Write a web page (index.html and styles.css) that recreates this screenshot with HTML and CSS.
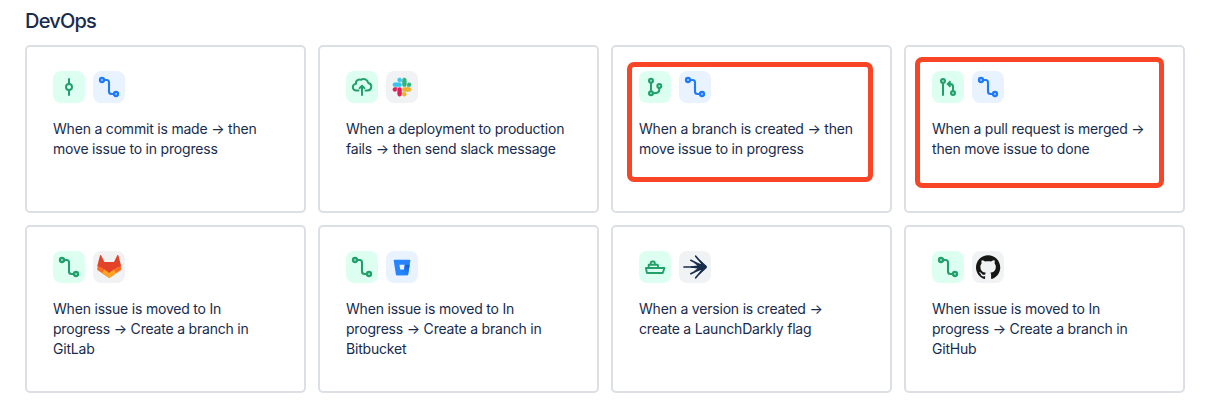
FILE: index.html
```html
<!DOCTYPE html>
<html lang="en">
<head>
<meta charset="utf-8">
<title>DevOps</title>
<link rel="stylesheet" href="styles.css">
</head>
<body>
<svg class="defs" width="0" height="0">
  <symbol id="move" viewBox="0 0 32 32"><g fill="none" stroke="currentColor" stroke-width="2.100"><circle cx="9" cy="9" r="2.100" fill="currentColor" fill-opacity=".35"/><circle cx="23" cy="23" r="2.100" fill="currentColor" fill-opacity=".35"/><path d="M11 9h2.500q2.500 0 2.500 2.500v9q0 2.500 2.500 2.500h2.500"/></g></symbol>
</svg>
<main class="section">
  <h2 class="title">DevOps</h2>
  <div class="grid">
    <article class="card">
      <div class="icons">
        <svg class="tile green" viewBox="0 0 32 32"><g fill="none" stroke="currentColor" stroke-width="2"><circle cx="16" cy="16" r="3"/><path d="M16 8v5M16 19v5" stroke-linecap="round"/></g></svg>
        <svg class="tile blue"><use href="#move"/></svg>
      </div>
      <p class="rule">When a commit is made → then<br>move issue to in progress</p>
    </article>
    <article class="card">
      <div class="icons">
        <svg class="tile green" viewBox="0 0 32 32"><g fill="none" stroke="currentColor" stroke-width="2" stroke-linecap="round" stroke-linejoin="round"><path d="M12.500 19.500H10.500a3.400 3.400 0 0 1-.5-6.800a3.300 3.300 0 0 1 1.500-3.500a3.300 3.300 0 0 1 3.500-.4a4.600 4.600 0 0 1 7.200 3.200a3.800 3.800 0 0 1-.2 7.500H19.500M16 24V15.500M13.600 17.100L16 14.700l2.400 2.400"/></g></svg>
        <svg class="tile gray" viewBox="0 0 32 32"><g transform="translate(6.900 7) scale(.148)" stroke-width="4"><path fill="#e01e5a" stroke="#e01e5a" d="M25.800 77.600a12.900 12.900 0 1 1-12.900-12.900h12.900zM32.300 77.600a12.900 12.900 0 0 1 25.800 0v32.300a12.900 12.900 0 0 1-25.800 0z"/><path fill="#36c5f0" stroke="#36c5f0" d="M45.200 25.800a12.900 12.900 0 1 1 12.900-12.900v12.900zM45.200 32.300a12.900 12.900 0 0 1 0 25.800H12.900a12.900 12.900 0 0 1 0-25.800z"/><path fill="#2eb67d" stroke="#2eb67d" d="M97 45.200a12.900 12.900 0 1 1 12.900 12.900H97zM90.500 45.200a12.900 12.900 0 0 1-25.800 0V12.900a12.900 12.900 0 0 1 25.800 0z"/><path fill="#ecb22e" stroke="#ecb22e" d="M77.600 97a12.900 12.900 0 1 1-12.900 12.900V97zM77.600 90.500a12.900 12.900 0 0 1 0-25.800h32.300a12.900 12.900 0 0 1 0 25.800z"/></g></svg>
      </div>
      <p class="rule">When a deployment to production<br>fails → then send slack message</p>
    </article>
    <article class="card">
      <div class="icons">
        <svg class="tile green" viewBox="0 0 32 32"><g fill="none" stroke="currentColor" stroke-width="2"><g fill="currentColor" fill-opacity=".35"><circle cx="12" cy="9.700" r="2"/><circle cx="12" cy="22.300" r="2"/><circle cx="20.300" cy="15" r="2"/></g><path d="M12 11.700v8.600M20.300 17v1.500q0 3.200-3.200 3.400L14 22.300"/></g></svg>
        <svg class="tile blue"><use href="#move"/></svg>
      </div>
      <p class="rule">When a branch is created → then<br>move issue to in progress</p>
      <div class="highlight highlight-branch"></div>
    </article>
    <article class="card">
      <div class="icons">
        <svg class="tile green" viewBox="0 0 32 32"><g fill="none" stroke="currentColor" stroke-width="2"><g fill="currentColor" fill-opacity=".35"><circle cx="11" cy="10" r="2"/><circle cx="21" cy="22" r="2"/></g><path d="M11 12v12" stroke-linecap="round"/><path d="M21 20v-4.500q0-2.500-2.500-2.500h-2M18.500 10.300l-2.700 2.700 2.700 2.700"/></g></svg>
        <svg class="tile blue"><use href="#move"/></svg>
      </div>
      <p class="rule">When a pull request is merged →<br>then move issue to done</p>
      <div class="highlight highlight-merge"></div>
    </article>
    <article class="card">
      <div class="icons">
        <svg class="tile green"><use href="#move"/></svg>
        <svg class="tile gray" viewBox="0 0 32 32"><path fill="#fc6d26" d="M5.800 12L4.200 17.500q-.3 1 .5 1.700L16.200 27l11.500-7.800q.8-.7.500-1.700L26.600 12z"/><path fill="#e24329" d="M7 4.300q.6-.8 1.100 0L11.400 11h9.600L24.300 4.300q.5-.8 1.100 0L28.200 15.200q-4 .4-7.400 3.300L16.200 22l-4.600-3.500q-3-2.900-7.400-3.300z"/><path fill="#fca326" d="M11.300 18.600l4.900 3.500 4.900-3.500 2.200 3.600L16.200 27l-7.100-4.800z"/></svg>
      </div>
      <p class="rule">When issue is moved to In<br>progress → Create a branch in<br>GitLab</p>
    </article>
    <article class="card">
      <div class="icons">
        <svg class="tile green"><use href="#move"/></svg>
        <svg class="tile blue" viewBox="0 0 32 32"><defs><linearGradient id="bucket" x1="1" y1="0" x2=".4" y2=".7"><stop offset=".1" stop-color="#1060d4"/><stop offset="1" stop-color="#2684ff"/></linearGradient></defs><path fill="#2684ff" fill-rule="evenodd" d="M8.300 8.700h15.500q.7 0 .6.700l-2.300 14.200q-.1.700-.8.700H10.700q-.7 0-.8-.7L7.700 9.400q-.1-.7.600-.7zM13.400 13.800l.9 5h3.700l.8-5z"/><path fill="url(#bucket)" d="M23.700 13.800h-4.900l-.8 5h-3.700l-4.100 5.200q.3.300.7.300h10.400q.7 0 .8-.7z"/></svg>
      </div>
      <p class="rule">When issue is moved to In<br>progress → Create a branch in<br>Bitbucket</p>
    </article>
    <article class="card">
      <div class="icons">
        <svg class="tile green" viewBox="0 0 32 32"><g fill="none" stroke="currentColor" stroke-width="1.900" stroke-linejoin="round"><path d="M7 17h18.500l-1.800 5H8.700q-.8 0-1-.8zM9.700 17v-3.300h9l.8 3.300M11.700 13.500v-1.300q0-1.700 1.600-1.700h.9q1.600 0 1.600 1.700v1.300"/></g></svg>
        <svg class="tile gray" viewBox="0 0 32 32"><g fill="none" stroke="#172b4d" stroke-width="1.700" stroke-linecap="round"><path d="M5 16h20M11.800 9.300L24 15.500M16.700 5.200L25 15M11.800 22.700L24 16.700M16.700 26.800L25 17"/></g><path fill="#172b4d" d="M28 16q0 .6-.6 1.200L20 24l2.500-5-7.500 1 3.500-2.600-6.500-.7v-1.400l6.500-.7L15 12l7.500 1L20 8l7.400 6.800q.6.600.6 1.200z"/></svg>
      </div>
      <p class="rule">When a version is created →<br>create a LaunchDarkly flag</p>
    </article>
    <article class="card">
      <div class="icons">
        <svg class="tile green"><use href="#move"/></svg>
        <svg class="tile gray" viewBox="0 0 32 32"><path fill="#161614" transform="translate(4 4) scale(1.010)" d="M12 .297c-6.630 0-12 5.373-12 12 0 5.303 3.438 9.800 8.205 11.385.6.113.820-.258.820-.577 0-.285-.010-1.040-.015-2.040-3.338.724-4.042-1.610-4.042-1.610C4.422 18.070 3.633 17.700 3.633 17.700c-1.087-.744.084-.729.084-.729 1.205.084 1.838 1.236 1.838 1.236 1.070 1.835 2.809 1.305 3.495.998.108-.776.417-1.305.760-1.605-2.665-.3-5.466-1.332-5.466-5.930 0-1.310.465-2.380 1.235-3.220-.135-.303-.540-1.523.105-3.176 0 0 1.005-.322 3.300 1.230.960-.267 1.980-.399 3-.405 1.020.006 2.040.138 3 .405 2.280-1.552 3.285-1.230 3.285-1.230.645 1.653.240 2.873.120 3.176.765.840 1.230 1.910 1.230 3.220 0 4.610-2.805 5.625-5.475 5.920.420.360.810 1.096.810 2.220 0 1.606-.015 2.896-.015 3.286 0 .315.210.690.825.570C20.565 22.092 24 17.592 24 12.297c0-6.627-5.373-12-12-12"/></svg>
      </div>
      <p class="rule">When issue is moved to In<br>progress → Create a branch in<br>GitHub</p>
    </article>
  </div>
</main>
</body>
</html>
```
FILE: styles.css
```css
body {
  margin: 0;
  background: #fff;
  color: #172b4d;
  font-family: Inter, "Liberation Sans", sans-serif;
}
.defs { position: absolute; }
.section { padding: 9px 31px 0 25px; }
.title {
  margin: 0 0 12px;
  font-size: 20px;
  line-height: 24px;
  font-weight: 500;
  letter-spacing: -0.8px;
}
.grid {
  display: grid;
  grid-template-columns: repeat(4, 281px);
  grid-auto-rows: 168px;
  gap: 12px;
}
.card {
  position: relative;
  box-sizing: border-box;
  border: 2px solid #dcdfe4;
  border-radius: 5px;
  padding: 24px 20px 0 26px;
}
.icons { display: flex; gap: 8px; }
.tile { width: 32px; height: 32px; border-radius: 8px; }
.green { background: #dcfff1; color: #22a06b; }
.blue { background: #e9f2ff; color: #1d7afc; }
.gray { background: #f1f2f4; }
.rule {
  margin: 16px 0 0;
  font-size: 14px;
  line-height: 20px;
  letter-spacing: -0.2px;
  white-space: nowrap;
}
.highlight {
  position: absolute;
  box-sizing: border-box;
  border: 5px solid #f74525;
  border-radius: 7px;
}
.highlight-branch { left: 14px; top: 15px; width: 246px; height: 120px; }
.highlight-merge { left: 9px; top: 10px; width: 249px; height: 131px; }
```
